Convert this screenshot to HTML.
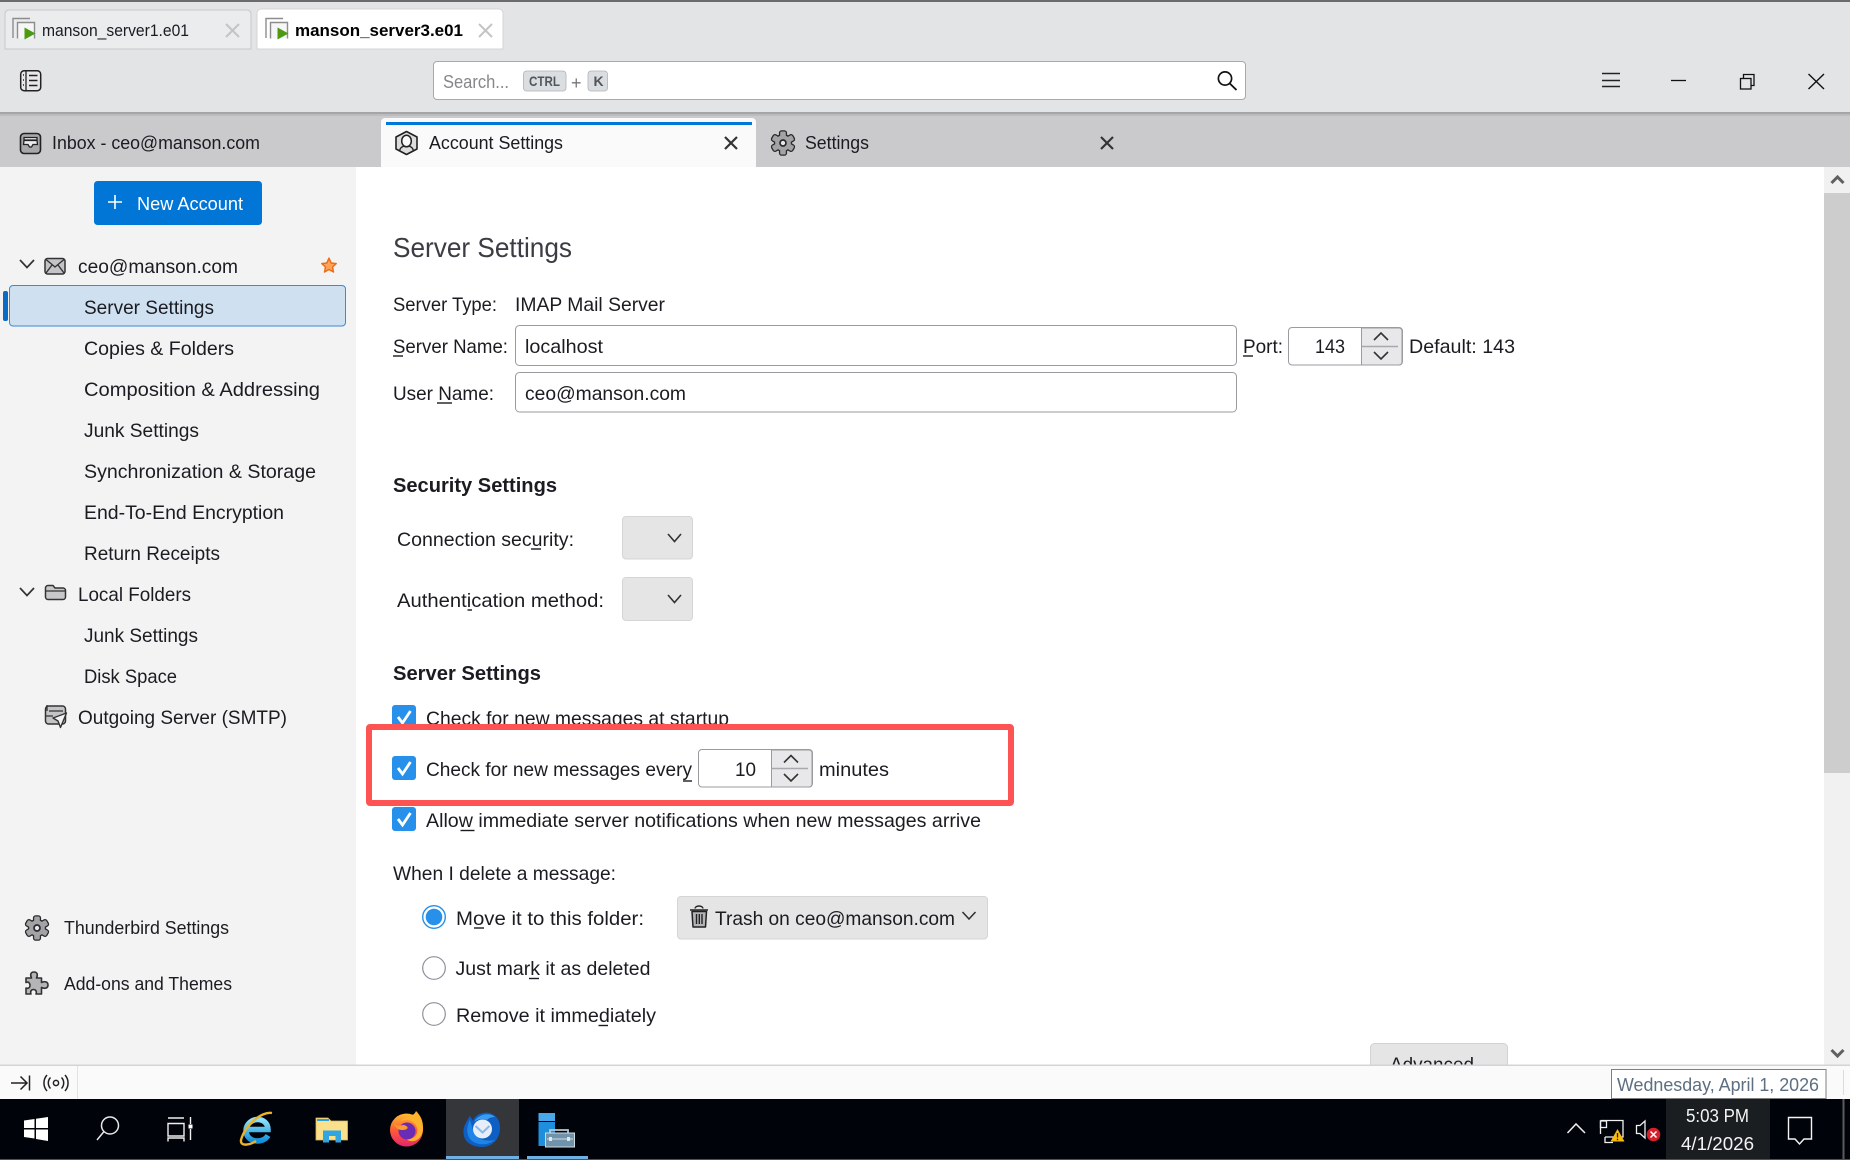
<!DOCTYPE html>
<html><head><meta charset="utf-8"><style>
html,body{margin:0;padding:0;background:#fff;width:1850px;height:1160px;overflow:hidden}
svg{display:block}
text{font-family:"Liberation Sans",sans-serif;font-size:19.500px;fill:#1b1b22}
.b{font-weight:bold;font-size:20.500px}
.s{font-size:18.500px}
.t{font-size:17px}
.ul{stroke:#1b1b22;stroke-width:1.4}
.chev{fill:none;stroke:#333;stroke-width:1.6}
.x{stroke:#333;stroke-width:2.2;fill:none}
.ic{stroke:#333;stroke-width:1.6;fill:#b5b5b7;stroke-linejoin:round}
</style></head><body>
<svg width="1850" height="1160" viewBox="0 0 1850 1160" xmlns="http://www.w3.org/2000/svg">
<defs>
<g id="gearS"><circle r="7.800"/><rect x="-2.800" y="-11.500" width="5.600" height="23" rx="1.400"/><rect x="-2.800" y="-11.500" width="5.600" height="23" rx="1.400" transform="rotate(60)"/><rect x="-2.800" y="-11.500" width="5.600" height="23" rx="1.400" transform="rotate(120)"/></g>
<g id="gear"><use href="#gearS" fill="#2a2a2e" stroke="#2a2a2e" stroke-width="2.600"/><use href="#gearS" fill="#a3a3a6"/><circle r="3" fill="#e8e8ea" stroke="#2a2a2e" stroke-width="1.700"/></g>
<g id="tabic"><path d="M13 38V18.500H30" fill="none" stroke="#8d8d8d" stroke-width="1.400"/><path d="M17.500 38.500V22.500H34.500V38.500" fill="#f6f6f6" stroke="#8d8d8d" stroke-width="1.400"/><path d="M24.500 27.500L35.500 33.500L24.500 39.500Z" fill="#4c9a12"/></g>
<linearGradient id="ffg" x1="0" y1="0" x2="0" y2="1"><stop offset="0" stop-color="#ffbd2e"/><stop offset=".5" stop-color="#ff5c36"/><stop offset="1" stop-color="#e6246c"/></linearGradient>
<linearGradient id="ieg" x1="0" y1="0" x2="0" y2="1"><stop offset="0" stop-color="#8fe2fb"/><stop offset="1" stop-color="#1590d8"/></linearGradient>
</defs>

<!-- top strip -->
<rect width="1850" height="112" fill="#e3e4e6"/>
<rect width="1850" height="2" fill="#6c6c6e"/>
<path d="M5 49V14a4 4 0 0 1 4-4H247a4 4 0 0 1 4 4V49Z" fill="#ebecee" stroke="#c6c7c9"/>
<path d="M257 49V13a4 4 0 0 1 4-4H499a4 4 0 0 1 4 4V49Z" fill="#fff" stroke="#d4d5d7"/>
<use href="#tabic"/>
<use href="#tabic" x="253"/>
<text class="t" x="42" y="36" textLength="147" lengthAdjust="spacingAndGlyphs">manson_server1.e01</text>
<text class="t" x="295" y="36" textLength="168" lengthAdjust="spacingAndGlyphs" style="font-weight:bold;fill:#000">manson_server3.e01</text>
<path d="M226 24L239 37M239 24L226 37" stroke="#c3c4c6" stroke-width="2" fill="none"/>
<path d="M479 24L492 37M492 24L479 37" stroke="#c3c4c6" stroke-width="2" fill="none"/>

<!-- toolbar -->
<rect x="20.700" y="70.700" width="20" height="20" rx="3.500" fill="#e8e8ea" stroke="#222" stroke-width="1.500"/>
<path d="M26 71V90" stroke="#222" stroke-width="1.300"/>
<path d="M23 75h1M23 80h1M23 85h1M29 75.500h8.500M29 80.500h8.500M29 85.500h8.500" stroke="#222" stroke-width="1.400"/>
<rect x="433.500" y="61.500" width="812" height="38" rx="3.500" fill="#fff" stroke="#a9a9ab"/>
<text class="s" x="443" y="88" textLength="66" lengthAdjust="spacingAndGlyphs" style="fill:#87878b">Search...</text>
<rect x="523.500" y="71" width="42.500" height="20" rx="3" fill="#dbdee1" stroke="#aeb2b6" stroke-width=".8"/>
<text x="529" y="86" textLength="31" lengthAdjust="spacingAndGlyphs" style="font-size:14px;font-weight:bold;fill:#51565c">CTRL</text>
<text x="571" y="89" style="font-size:18px;fill:#77777b">+</text>
<rect x="588" y="71" width="19.500" height="20" rx="3" fill="#dbdee1" stroke="#aeb2b6" stroke-width=".8"/>
<text x="593.500" y="86" style="font-size:14px;font-weight:bold;fill:#51565c">K</text>
<circle cx="1225" cy="78.500" r="6.600" fill="none" stroke="#111" stroke-width="1.700"/><path d="M1229.800 83.500L1236.500 90" stroke="#111" stroke-width="1.900"/>
<path d="M1602 73.500h18M1602 80.500h18M1602 86.500h18" stroke="#222" stroke-width="1.600"/>
<path d="M1671 80.500h15" stroke="#111" stroke-width="1.300"/>
<rect x="1740.500" y="78.500" width="10.500" height="10.500" fill="none" stroke="#111" stroke-width="1.300"/><path d="M1743.500 78V74.500H1754V85.500H1751" fill="none" stroke="#111" stroke-width="1.300"/>
<path d="M1808.500 74L1824 89M1824 74L1808.500 89" stroke="#111" stroke-width="1.400"/>

<!-- tab bar -->
<rect y="112" width="1850" height="55" fill="#cacacc"/>
<rect y="112" width="1850" height="2" fill="#a5a5a7"/><rect y="114" width="1850" height="2" fill="#bcbcbe"/>
<path d="M381 167V122a4 4 0 0 1 4-4H752a4 4 0 0 1 4 4V167Z" fill="#fafafa"/>
<rect x="386" y="122" width="366" height="3" fill="#0078d7"/>
<!-- inbox icon -->
<rect x="20.500" y="133.500" width="20" height="20" rx="3.500" fill="#a8a8aa" stroke="#222" stroke-width="1.600"/>
<path d="M24 137.500h13v2.500H24ZM24 143h4l1.500 2.500h2L33 143h4" fill="#ececee" stroke="#222" stroke-width="1.300"/>
<path d="M24 140.500L23.500 144.500H28L29.500 147H31.500L33 144.500H37.500L37 140.500Z" fill="#ececee" stroke="#222" stroke-width="1.300"/>
<text class="s" x="52" y="149" textLength="208" lengthAdjust="spacingAndGlyphs">Inbox - ceo@manson.com</text>
<!-- account icon -->
<path d="M406.500 131.500L417 137V149L406.500 154.500L396 149V137Z" fill="#ddd" stroke="#222" stroke-width="1.600" stroke-linejoin="round"/>
<ellipse cx="406.500" cy="141" rx="4.800" ry="5.800" fill="#fafafa" stroke="#222" stroke-width="1.500"/>
<path d="M399.500 151C400 147 403 146.500 404 146M413.500 151C413 147 410 146.500 409 146" fill="none" stroke="#222" stroke-width="1.400"/>
<text class="s" x="429" y="149" textLength="134" lengthAdjust="spacingAndGlyphs">Account Settings</text>
<path class="x" d="M725 137L737 149M737 137L725 149"/>
<use href="#gear" x="783" y="143"/>
<text class="s" x="805" y="149" textLength="64" lengthAdjust="spacingAndGlyphs">Settings</text>
<path class="x" d="M1101 137L1113 149M1113 137L1101 149"/>

<!-- sidebar -->
<rect y="167" width="356" height="898" fill="#f3f3f3"/>
<rect x="94" y="181" width="168" height="44" rx="3.500" fill="#0176d6"/>
<path d="M115 195V209M108 202H122" stroke="#fff" stroke-width="1.600"/>
<text class="s" x="137" y="210" textLength="106" lengthAdjust="spacingAndGlyphs" style="fill:#fff">New Account</text>

<path class="chev" d="M20 260L27 267.500L34 260" style="stroke-width:1.700"/>
<rect x="45" y="258.500" width="20" height="15.500" rx="2.500" fill="#c4c4c6" stroke="#333" stroke-width="1.500"/><path d="M46 259.500L55 267L64 259.500M46 273L52 265M64 273L58 265" fill="none" stroke="#333" stroke-width="1.400"/>
<text x="78" y="273" textLength="160" lengthAdjust="spacingAndGlyphs">ceo@manson.com</text>
<path d="M329 258.200L331.200 263L336.200 263.600L332.500 267L333.500 272L329 269.500L324.500 272L325.500 267L321.800 263.600L326.800 263Z" fill="#fba45c" stroke="#ee6c16" stroke-width="1.500" stroke-linejoin="round"/>

<rect x="9.500" y="285.500" width="336" height="40.500" rx="3.500" fill="#cfe0f0" stroke="#3b8ad2"/>
<rect x="3" y="291" width="5" height="30" rx="2" fill="#0b6cc6"/>
<text x="84" y="314" textLength="130" lengthAdjust="spacingAndGlyphs">Server Settings</text>
<text x="84" y="355" textLength="150" lengthAdjust="spacingAndGlyphs">Copies &amp; Folders</text>
<text x="84" y="396" textLength="236" lengthAdjust="spacingAndGlyphs">Composition &amp; Addressing</text>
<text x="84" y="437" textLength="115" lengthAdjust="spacingAndGlyphs">Junk Settings</text>
<text x="84" y="478" textLength="232" lengthAdjust="spacingAndGlyphs">Synchronization &amp; Storage</text>
<text x="84" y="519" textLength="200" lengthAdjust="spacingAndGlyphs">End-To-End Encryption</text>
<text x="84" y="560" textLength="136" lengthAdjust="spacingAndGlyphs">Return Receipts</text>
<path class="chev" d="M20 588L27 595.500L34 588" style="stroke-width:1.700"/>
<path d="M45.500 590V588a2.500 2.500 0 0 1 2.500-2.500H53l2 2.500H63a2.500 2.500 0 0 1 2.500 2.500V597a2.500 2.500 0 0 1-2.500 2.500H48a2.500 2.500 0 0 1-2.500-2.500Z" fill="#c8c8ca" stroke="#333" stroke-width="1.500"/>
<path d="M46 591H65" stroke="#333" stroke-width="1.200"/>
<text x="78" y="601" textLength="113" lengthAdjust="spacingAndGlyphs">Local Folders</text>
<text x="84" y="642" textLength="114" lengthAdjust="spacingAndGlyphs">Junk Settings</text>
<text x="84" y="683" textLength="93" lengthAdjust="spacingAndGlyphs">Disk Space</text>
<rect x="45.500" y="706" width="20" height="18" rx="3" fill="#c4c4c6" stroke="#333" stroke-width="1.500"/>
<path d="M49 711H63M46 716H53M47 711V705" fill="none" stroke="#333" stroke-width="1.300"/>
<path d="M66.500 713L53 718L58 721L60.500 727.500Z" fill="#f3f3f3" stroke="#333" stroke-width="1.400" stroke-linejoin="round"/>
<text x="78" y="724" textLength="209" lengthAdjust="spacingAndGlyphs">Outgoing Server (SMTP)</text>
<use href="#gear" x="37" y="928"/>
<text class="s" x="64" y="934" textLength="165" lengthAdjust="spacingAndGlyphs">Thunderbird Settings</text>
<path class="ic" d="M26 978h5.500c-1.500-3-1-6 2.500-6s4 3 2.500 6H41.500v4.500c3-1.500 6.500-1 6.500 2.500s-3.500 4-6.500 2.500V994H36c1-3-.5-4.500-2.500-4.500S30 991 31 994H26V988c3 1 4-1 4-2.500S29 981 26 982.500Z"/>
<text class="s" x="64" y="990" textLength="168" lengthAdjust="spacingAndGlyphs">Add-ons and Themes</text>

<!-- main -->
<text x="393" y="257" textLength="179" lengthAdjust="spacingAndGlyphs" style="font-size:28px;fill:#3c3c44">Server Settings</text>
<text x="393" y="311" textLength="104" lengthAdjust="spacingAndGlyphs">Server Type:</text>
<text x="515" y="311" textLength="150" lengthAdjust="spacingAndGlyphs">IMAP Mail Server</text>
<text x="393" y="353" textLength="115" lengthAdjust="spacingAndGlyphs">Server Name:</text>
<path class="ul" d="M393 356H403"/>
<rect x="515.500" y="325.500" width="721" height="40" rx="4" fill="#fff" stroke="#9b9b9f"/>
<text x="525" y="353" textLength="78" lengthAdjust="spacingAndGlyphs">localhost</text>
<text x="1243" y="353" textLength="40" lengthAdjust="spacingAndGlyphs">Port:</text>
<path class="ul" d="M1243 356H1253"/>
<rect x="1288.500" y="327.500" width="114" height="37.500" rx="3.500" fill="#fff" stroke="#9b9b9f"/>
<path d="M1361.500 328V365H1399a3 3 0 0 0 3-3V331a3 3 0 0 0-3-3Z" fill="#e8e8ea" stroke="#9b9b9f"/>
<path d="M1361.500 346.500H1398" stroke="#a9a9ad" stroke-width="1.600"/>
<path class="chev" d="M1374 340L1381 333L1388 340M1374 352L1381 359L1388 352"/>
<text x="1315" y="353" textLength="30" lengthAdjust="spacingAndGlyphs">143</text>
<text x="1409" y="353" textLength="106" lengthAdjust="spacingAndGlyphs">Default: 143</text>
<text x="393" y="400" textLength="101" lengthAdjust="spacingAndGlyphs">User Name:</text>
<path class="ul" d="M437 403H452"/>
<rect x="515.500" y="372.500" width="721" height="39.500" rx="4" fill="#fff" stroke="#9b9b9f"/>
<text x="525" y="400" textLength="161" lengthAdjust="spacingAndGlyphs">ceo@manson.com</text>

<text class="b" x="393" y="492" textLength="164" lengthAdjust="spacingAndGlyphs">Security Settings</text>
<text x="397" y="546" textLength="177" lengthAdjust="spacingAndGlyphs">Connection security:</text>
<path class="ul" d="M531 549H541"/>
<rect x="622.500" y="516.500" width="70" height="42.500" rx="3.500" fill="#e5e5e5" stroke="#d5d5d7"/>
<path class="chev" d="M668 534L674.500 541.500L681 534"/>
<text x="397" y="607" textLength="207" lengthAdjust="spacingAndGlyphs">Authentication method:</text>
<path class="ul" d="M467.500 610H472"/>
<rect x="622.500" y="577.500" width="70" height="43" rx="3.500" fill="#e5e5e5" stroke="#d5d5d7"/>
<path class="chev" d="M668 595L674.500 602.500L681 595"/>

<text class="b" x="393" y="680" textLength="148" lengthAdjust="spacingAndGlyphs">Server Settings</text>
<rect x="392" y="705" width="24" height="24" rx="3" fill="#2690ea"/>
<path d="M398 717L402.500 723L410.500 711" fill="none" stroke="#fff" stroke-width="2.800"/>
<text x="426" y="725" textLength="303" lengthAdjust="spacingAndGlyphs">Check for new messages at startup</text>

<rect x="392" y="756" width="24" height="24" rx="3" fill="#2690ea"/>
<path d="M398 768L402.500 774L410.500 762" fill="none" stroke="#fff" stroke-width="2.800"/>
<text x="426" y="776" textLength="266" lengthAdjust="spacingAndGlyphs">Check for new messages every</text>
<path class="ul" d="M683 781H692"/>
<rect x="698.500" y="749.500" width="114" height="37.500" rx="3.500" fill="#fff" stroke="#9b9b9f"/>
<path d="M771.500 750V787H809a3 3 0 0 0 3-3V753a3 3 0 0 0-3-3Z" fill="#e8e8ea" stroke="#9b9b9f"/>
<path d="M771.500 768.500H808" stroke="#a9a9ad" stroke-width="1.600"/>
<path class="chev" d="M784 762.500L791 755.500L798 762.500M784 774L791 781L798 774"/>
<text x="735" y="776" textLength="21" lengthAdjust="spacingAndGlyphs">10</text>
<text x="819" y="776" textLength="70" lengthAdjust="spacingAndGlyphs">minutes</text>

<rect x="392" y="807" width="24" height="24" rx="3" fill="#2690ea"/>
<path d="M398 819L402.500 825L410.500 813" fill="none" stroke="#fff" stroke-width="2.800"/>
<text x="426" y="827" textLength="555" lengthAdjust="spacingAndGlyphs">Allow immediate server notifications when new messages arrive</text>
<path class="ul" d="M460.500 830.500H474.500"/>

<rect x="369" y="727" width="642" height="76" rx="1" fill="none" stroke="#fd5353" stroke-width="6"/>

<text x="393" y="880" textLength="223" lengthAdjust="spacingAndGlyphs">When I delete a message:</text>
<circle cx="434" cy="917" r="11.300" fill="#fff" stroke="#2690ea" stroke-width="1.400"/><circle cx="434" cy="917" r="8.300" fill="#2690ea"/>
<text x="456" y="925" textLength="188" lengthAdjust="spacingAndGlyphs">Move it to this folder:</text>
<path class="ul" d="M474 928H484"/>
<rect x="677.500" y="896.500" width="310" height="42.500" rx="3.500" fill="#e5e5e5" stroke="#d5d5d7"/>
<path d="M692 911.500H706.500L705.500 927H693Z" fill="#b5b5b7" stroke="#222" stroke-width="1.500" stroke-linejoin="round"/>
<path d="M690 910H708M695 908.500a4 2.500 0 0 1 8 0M696.500 914V924M699.300 914V924M702 914V924" fill="none" stroke="#222" stroke-width="1.400"/>
<text x="715" y="925" textLength="240" lengthAdjust="spacingAndGlyphs">Trash on ceo@manson.com</text>
<path class="chev" d="M962.500 912L969 919L975.500 912"/>
<circle cx="434" cy="968" r="11.300" fill="#fff" stroke="#8f8f9d" stroke-width="1.200"/>
<text x="455.500" y="975" textLength="195" lengthAdjust="spacingAndGlyphs">Just mark it as deleted</text>
<path class="ul" d="M529 978.500H539"/>
<circle cx="434" cy="1014" r="11.300" fill="#fff" stroke="#8f8f9d" stroke-width="1.200"/>
<text x="456" y="1022" textLength="200" lengthAdjust="spacingAndGlyphs">Remove it immediately</text>
<path class="ul" d="M598.500 1025.500H608"/>

<rect x="1370.500" y="1043.500" width="137" height="40" rx="4" fill="#e5e5e5" stroke="#d2d2d4"/>
<text x="1390" y="1071" textLength="84" lengthAdjust="spacingAndGlyphs">Advanced</text>

<!-- scrollbar -->
<rect x="1824" y="167" width="26" height="898" fill="#f1f1f1"/>
<rect x="1824" y="193" width="26" height="580" fill="#cdcdcd"/>
<path d="M1831.500 183L1837.500 177L1843.500 183" fill="none" stroke="#606060" stroke-width="3"/>
<path d="M1831.500 1050L1837.500 1056L1843.500 1050" fill="none" stroke="#606060" stroke-width="3"/>

<!-- status bar -->
<rect y="1065" width="1850" height="34" fill="#fafafa"/>
<rect y="1064.500" width="1850" height="1.500" fill="#d4d4d6"/>
<rect x="77" y="1066" width="1" height="33" fill="#e2e2e4"/>
<path d="M11 1083H27M20.500 1076.500L27 1083L20.500 1089.500M29.500 1075.500V1090.500" fill="none" stroke="#222" stroke-width="1.500"/>
<circle cx="56" cy="1083" r="2.600" fill="none" stroke="#222" stroke-width="1.500"/>
<path d="M50.500 1077.500a8 8 0 0 0 0 11M61.500 1077.500a8 8 0 0 1 0 11M47 1075a12 12 0 0 0 0 16M65 1075a12 12 0 0 1 0 16" fill="none" stroke="#222" stroke-width="1.500"/>
<rect x="1843" y="1070" width="1" height="25" fill="#dcdcde"/>
<rect x="1611.500" y="1069.500" width="214.500" height="29" fill="#fff" stroke="#7f7f7f"/>
<text class="s" x="1617" y="1091" textLength="202" lengthAdjust="spacingAndGlyphs" style="fill:#5d6f80">Wednesday, April 1, 2026</text>

<!-- taskbar -->
<rect y="1099" width="1850" height="61" fill="#01030a"/>
<rect y="1159" width="1850" height="1" fill="#505052"/>
<path d="M24 1120.500L34.500 1119V1128H24ZM36 1118.800L48 1117V1128H36ZM24 1129.500H34.500V1138.500L24 1137ZM36 1129.500H48V1141L36 1139Z" fill="#fff"/>
<circle cx="110" cy="1125.500" r="8.500" fill="none" stroke="#e8e8e8" stroke-width="1.500"/><path d="M104 1131.500L97 1140" stroke="#e8e8e8" stroke-width="1.500"/>
<path d="M168 1118H184M168 1123.500H184V1136H168ZM168 1141.500V1138H184V1141.500M190.500 1117V1124M190.500 1129V1140" fill="none" stroke="#f0f0f0" stroke-width="1.400"/>
<rect x="188.500" y="1124.500" width="4" height="4" fill="#fff"/>
<!-- IE -->
<path d="M248 1129.500H268C268 1123 263 1119.500 257.500 1119.500C251 1119.500 246 1125 246 1130.500C246 1137 251 1141 257.500 1141C262 1141 266 1139 268 1135.500" fill="none" stroke="url(#ieg)" stroke-width="5.500"/>
<path d="M272 1113C262 1111 245 1125 241 1140C240 1147 250 1145 256 1141" fill="none" stroke="#eab32a" stroke-width="2.400"/>
<!-- Explorer -->
<path d="M316 1118H328L331 1121H347.500V1140H316Z" fill="#fbe08c" stroke="#d9b85c" stroke-width=".8"/>
<rect x="317" y="1119" width="12" height="2" fill="#2aa0e0"/>
<path d="M323 1142.500V1130.500H341V1142.500H335.500V1136H329V1142.500Z" fill="#2fa6e2"/>
<!-- Firefox -->
<circle cx="406.500" cy="1130" r="16.500" fill="url(#ffg)"/>
<path d="M416 1111C413 1118 406 1115 401 1121C408 1118 415 1121 417 1128C419 1136 411 1141 405 1138C413 1146 424 1138 423 1127C423 1120 420 1115 416 1111Z" fill="#ffb32c"/>
<circle cx="407" cy="1131" r="8.500" fill="#6a2bb5"/>
<path d="M394 1124C398 1127 401 1125 404 1125C410 1127 408 1130 402 1130C398 1130 396 1128 394 1124Z" fill="#ff9a2e"/>
<!-- Thunderbird -->
<rect x="446" y="1099" width="73" height="60" fill="#35363a"/>
<rect x="446" y="1156" width="73" height="3" fill="#6fb0e4"/>
<rect x="527" y="1156" width="61" height="3" fill="#6fb0e4"/>
<path d="M470 1116C466 1122 463 1127 463.500 1133C464 1142 472 1147 482 1147C492 1147 500 1139 500 1128C500 1122 498 1118 495 1116C492 1113 487 1112 483 1113C478 1114 474 1117 473 1121C472 1119 471 1118 470 1116Z" fill="#0d5fc4"/>
<path d="M470 1120C466 1127 466 1136 472 1141C479 1146 489 1145 495 1140C485 1142 475 1139 473 1130C472 1127 471 1123 470 1120Z" fill="#1e84e6"/>
<path d="M474 1122C478 1114 489 1112 495 1117C491 1117 489 1118 487 1120C482 1118 478 1119 474 1122Z" fill="#3c9cf0"/>
<circle cx="482.500" cy="1129" r="9.500" fill="#e6eef9"/>
<path d="M475.500 1126L482.500 1132.500L489.500 1126" fill="none" stroke="#8cb8e6" stroke-width="2"/>
<!-- Server manager -->
<rect x="538.500" y="1113" width="16.500" height="8" fill="#4aa8ea"/>
<rect x="538.500" y="1122" width="16.500" height="24" fill="#1f8edc"/>
<path d="M550 1135V1130H568V1135" fill="none" stroke="#b9c9d6" stroke-width="1.800"/>
<rect x="545.500" y="1133" width="29" height="14" fill="#6f93aa" stroke="#cfdbe3"/>
<path d="M547 1139H573" stroke="#cfdbe3"/>
<rect x="549" y="1137" width="3" height="4" fill="#dfe6ec"/><rect x="567" y="1137" width="3" height="4" fill="#dfe6ec"/>

<!-- tray -->
<path d="M1567.500 1133L1576 1124L1585 1133" fill="none" stroke="#f0f0f0" stroke-width="1.500"/>
<path d="M1600.500 1120.500H1623V1137H1605M1600.500 1120.500V1134M1605 1137V1142.500H1613" fill="none" stroke="#f0f0f0" stroke-width="1.300"/>
<rect x="1600.500" y="1121" width="6" height="6.500" fill="none" stroke="#f0f0f0" stroke-width="1.300"/>
<path d="M1617.500 1129L1624.500 1141.500H1610.500Z" fill="#fbb90d"/>
<path d="M1617.500 1133V1137.500M1617.500 1138.700V1140.300" stroke="#222" stroke-width="1.300"/>
<path d="M1636.500 1125.500H1640L1645 1121V1138L1640 1133.500H1636.500Z" fill="none" stroke="#f0f0f0" stroke-width="1.300"/>
<circle cx="1653.500" cy="1134.500" r="6.800" fill="#d9202a"/>
<path d="M1650.500 1131.500L1656.500 1137.500M1656.500 1131.500L1650.500 1137.500" stroke="#fff" stroke-width="1.500"/>
<rect x="1666" y="1099" width="104" height="60" fill="#1b1e21"/>
<text class="s" x="1686" y="1122" textLength="63" lengthAdjust="spacingAndGlyphs" style="fill:#f4f4f4">5:03 PM</text>
<text class="s" x="1681" y="1150" textLength="73" lengthAdjust="spacingAndGlyphs" style="fill:#f4f4f4">4/1/2026</text>
<path d="M1788.500 1117.500H1811.500V1139H1804L1799.500 1144L1795 1139H1788.500Z" fill="none" stroke="#f4f4f4" stroke-width="1.400"/>
<rect x="1842.500" y="1099" width="2" height="60" fill="#5a5a5c"/>
</svg>
</body></html>
